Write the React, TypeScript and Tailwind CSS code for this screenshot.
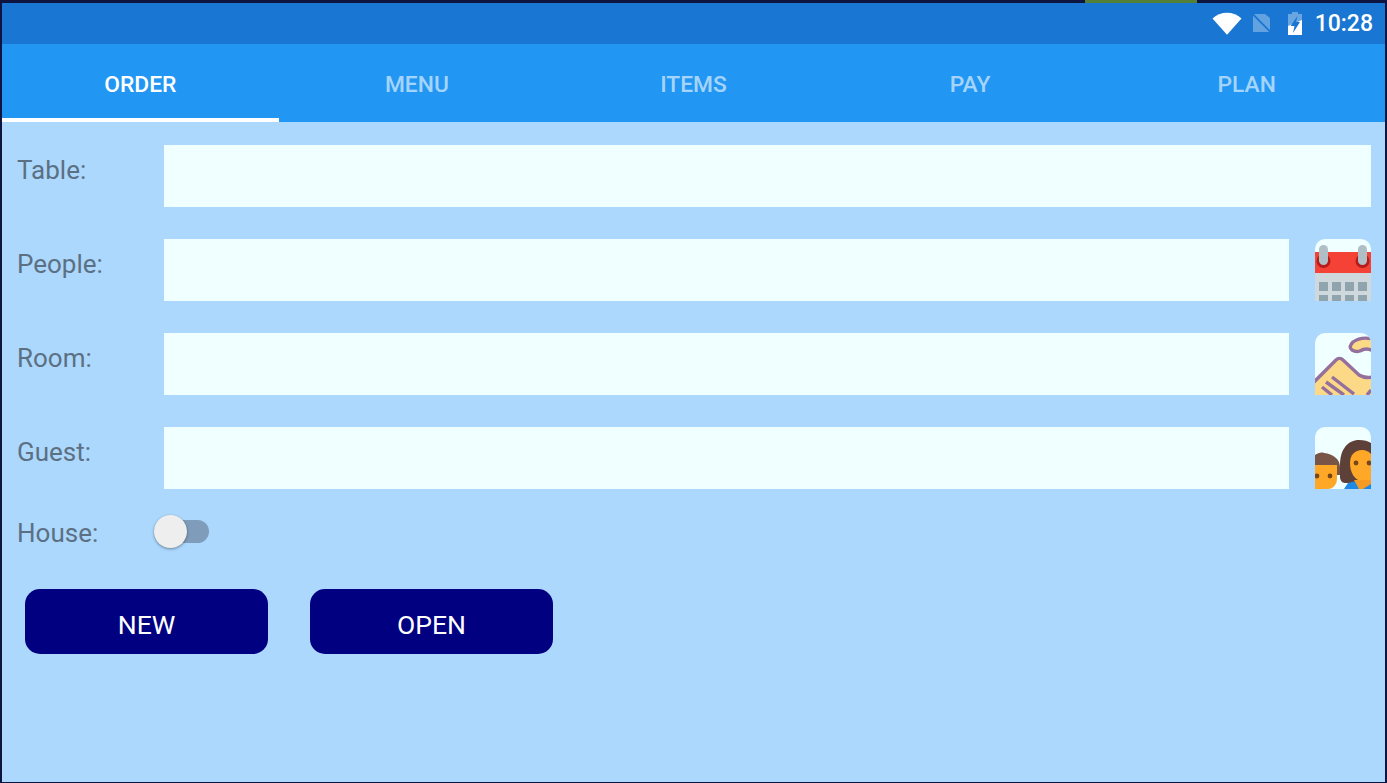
const tabs = ["ORDER", "MENU", "ITEMS", "PAY", "PLAN"];

function WifiIcon() {
  return (
    <svg width="30" height="23" viewBox="0 0 30 23" className="shrink-0">
      <path d="M0.5 6.5C4.5 2.8 9.5 0.8 15 0.8s10.5 2 14.5 5.7L15 22.8z" fill="#ffffff" />
    </svg>
  );
}

function SimIcon() {
  return (
    <svg width="21" height="21" viewBox="0 0 21 21" className="shrink-0">
      <path d="M1 1h12l5 4v14H1z" fill="#ffffff" fillOpacity="0.32" />
      <path d="M0.5 1L20 20.5" stroke="#1976d2" strokeWidth="1.8" />
    </svg>
  );
}

function BatteryIcon() {
  return (
    <svg width="16" height="23" viewBox="0 0 16 23" className="shrink-0">
      <path d="M5 0h6v2h4v21H1V2h4z" fill="#ffffff" fillOpacity="0.35" />
      <path d="M1 14L15 8v15H1z" fill="#ffffff" />
      <path d="M10.5 4L3.5 14H7.5L6 21L13 10H9z" fill="#1976d2" />
    </svg>
  );
}

function CalendarIcon() {
  return (
    <svg viewBox="0 0 56 62" className="h-[62px] w-[56px]">
      <rect width="56" height="14" fill="#f0ffff" />
      <rect y="13" width="56" height="21" fill="#f44336" />
      <rect y="34" width="56" height="28" fill="#cfd8dc" />
      <circle cx="8.5" cy="22" r="7" fill="#b71c1c" />
      <circle cx="47.5" cy="22" r="7" fill="#b71c1c" />
      <rect x="4" y="6" width="9" height="20" rx="4.5" fill="#b0bec5" />
      <rect x="43" y="6" width="9" height="20" rx="4.5" fill="#b0bec5" />
      {[4, 17, 30, 43].map((x) => (
        <g key={x} fill="#90a4ae">
          <rect x={x} y="43" width="9" height="9" />
          <rect x={x} y="56" width="9" height="6" />
        </g>
      ))}
    </svg>
  );
}

function HandshakeIcon() {
  return (
    <svg viewBox="0 0 56 62" className="h-[62px] w-[56px]">
      <rect width="56" height="62" fill="#f0ffff" />
      <path d="M58 6C49 4 42 6 38 9c-3 3-4 6-1 8 3 2 5 2 8 1 3-2 8-3 13 0z" fill="#fbd986" stroke="#96709c" strokeWidth="3.4" />
      <path d="M-2 50L21 27c2-2 5-2 7 0l16 15c3 2 8 3 14 2v20H-2z" fill="#fbd986" stroke="#96709c" strokeWidth="3.4" />
      <path d="M17 44L39 61M11 49L29 62M7 54L17 62M56 57L52 62" stroke="#96709c" strokeWidth="3.4" fill="none" />
    </svg>
  );
}

function GuestIcon() {
  return (
    <svg viewBox="0 0 56 62" className="h-[62px] w-[56px]">
      <rect width="56" height="62" fill="#f0ffff" />
      <path d="M25 50V38C25 22 33 13 44 13c5 0 9 1 12 3v40H30c-3 0-5-3-5-6z" fill="#5d4037" />
      <path d="M35 36c0-8 5-13 12-13 4 0 7 2 9 4v27h-10c-6-1-11-8-11-18z" fill="#ffa726" />
      <path d="M29 62l4-6 8-2h15v8z" fill="#1e88e5" />
      <path d="M39 53h17v4l-8 5h-4z" fill="#f59a23" />
      <path d="M0 28c3-2 6-3 9-2 9 1 16 6 16 14v8h-3V38H0z" fill="#795548" />
      <path d="M0 38h22v14c0 5-4 10-9 10H0z" fill="#ffa726" />
      <circle cx="2" cy="49" r="2.4" fill="#784719" />
      <circle cx="15" cy="49" r="2.4" fill="#784719" />
      <circle cx="41" cy="36" r="2.4" fill="#784719" />
      <circle cx="54" cy="36" r="2.4" fill="#784719" />
    </svg>
  );
}

const rows = [
  { label: "Table:", icon: null },
  { label: "People:", icon: <CalendarIcon /> },
  { label: "Room:", icon: <HandshakeIcon /> },
  { label: "Guest:", icon: <GuestIcon /> },
];

export default function App() {
  return (
    <div
      className="h-[783px] w-[1387px] overflow-hidden bg-[#0e1440] pb-px pl-[2px] pr-[2px] pt-[3px]"
      style={{ fontFamily: "Roboto, sans-serif" }}
    >
      <div className="flex h-full flex-col bg-[#acd8fe]">
        <div className="relative flex h-[41px] items-center justify-end bg-[#1976d2] pr-[12px]">
          <div className="absolute -top-[3px] left-[1083px] h-[3px] w-[112px] bg-[#55803a]" />
          <div className="flex items-center text-white">
            <WifiIcon />
            <div className="ml-[10px]">
              <SimIcon />
            </div>
            <div className="ml-[14px]">
              <BatteryIcon />
            </div>
            <span className="ml-[12px] text-[23px] font-medium leading-none">10:28</span>
          </div>
        </div>

        <div className="flex h-[78px] bg-[#2196f3]">
          {tabs.map((tab, i) => (
            <div
              key={tab}
              className={
                i === 0
                  ? "flex flex-1 items-center justify-center border-b-[4px] border-white pt-[8px] text-[22.8px] font-medium text-white"
                  : "flex flex-1 items-center justify-center pt-[4px] text-[22.8px] font-medium text-white/60"
              }
            >
              {tab}
            </div>
          ))}
        </div>

        <div className="flex flex-col gap-[32px] pl-[15px] pr-[14px] pt-[23px]">
          {rows.map((row) => (
            <div key={row.label} className="flex h-[62px] items-start">
              <span className="w-[147px] shrink-0 pt-[9px] text-[26px] leading-[33px] text-[#5c7083]">{row.label}</span>
              <div className="h-[62px] flex-1 bg-[#f0ffff]" />
              {row.icon ? (
                <div className="ml-[26px] h-[62px] w-[56px] shrink-0 overflow-hidden rounded-t-[10px]">{row.icon}</div>
              ) : null}
            </div>
          ))}
        </div>

        <div className="mt-[25px] flex h-[38px] items-center pl-[15px]">
          <span className="w-[137px] shrink-0 text-[26px] text-[#5c7083]">House:</span>
          <div className="relative mb-[3px] ml-[11px] h-[23px] w-[44px] rounded-full bg-[#7f9cba]">
            <div className="absolute -left-[11px] -top-[5px] h-[33px] w-[33px] rounded-full bg-[#eeeeee] shadow-[0_1px_3px_rgba(0,0,0,0.4)]" />
          </div>
        </div>

        <div className="ml-[23px] mt-[37px] flex gap-[42px]">
          {["NEW", "OPEN"].map((label) => (
            <div
              key={label}
              className="flex h-[65px] w-[243px] items-center justify-center rounded-[15px] bg-[#000080] pt-[7px] text-[26.5px] text-white"
            >
              {label}
            </div>
          ))}
        </div>
      </div>
    </div>
  );
}
